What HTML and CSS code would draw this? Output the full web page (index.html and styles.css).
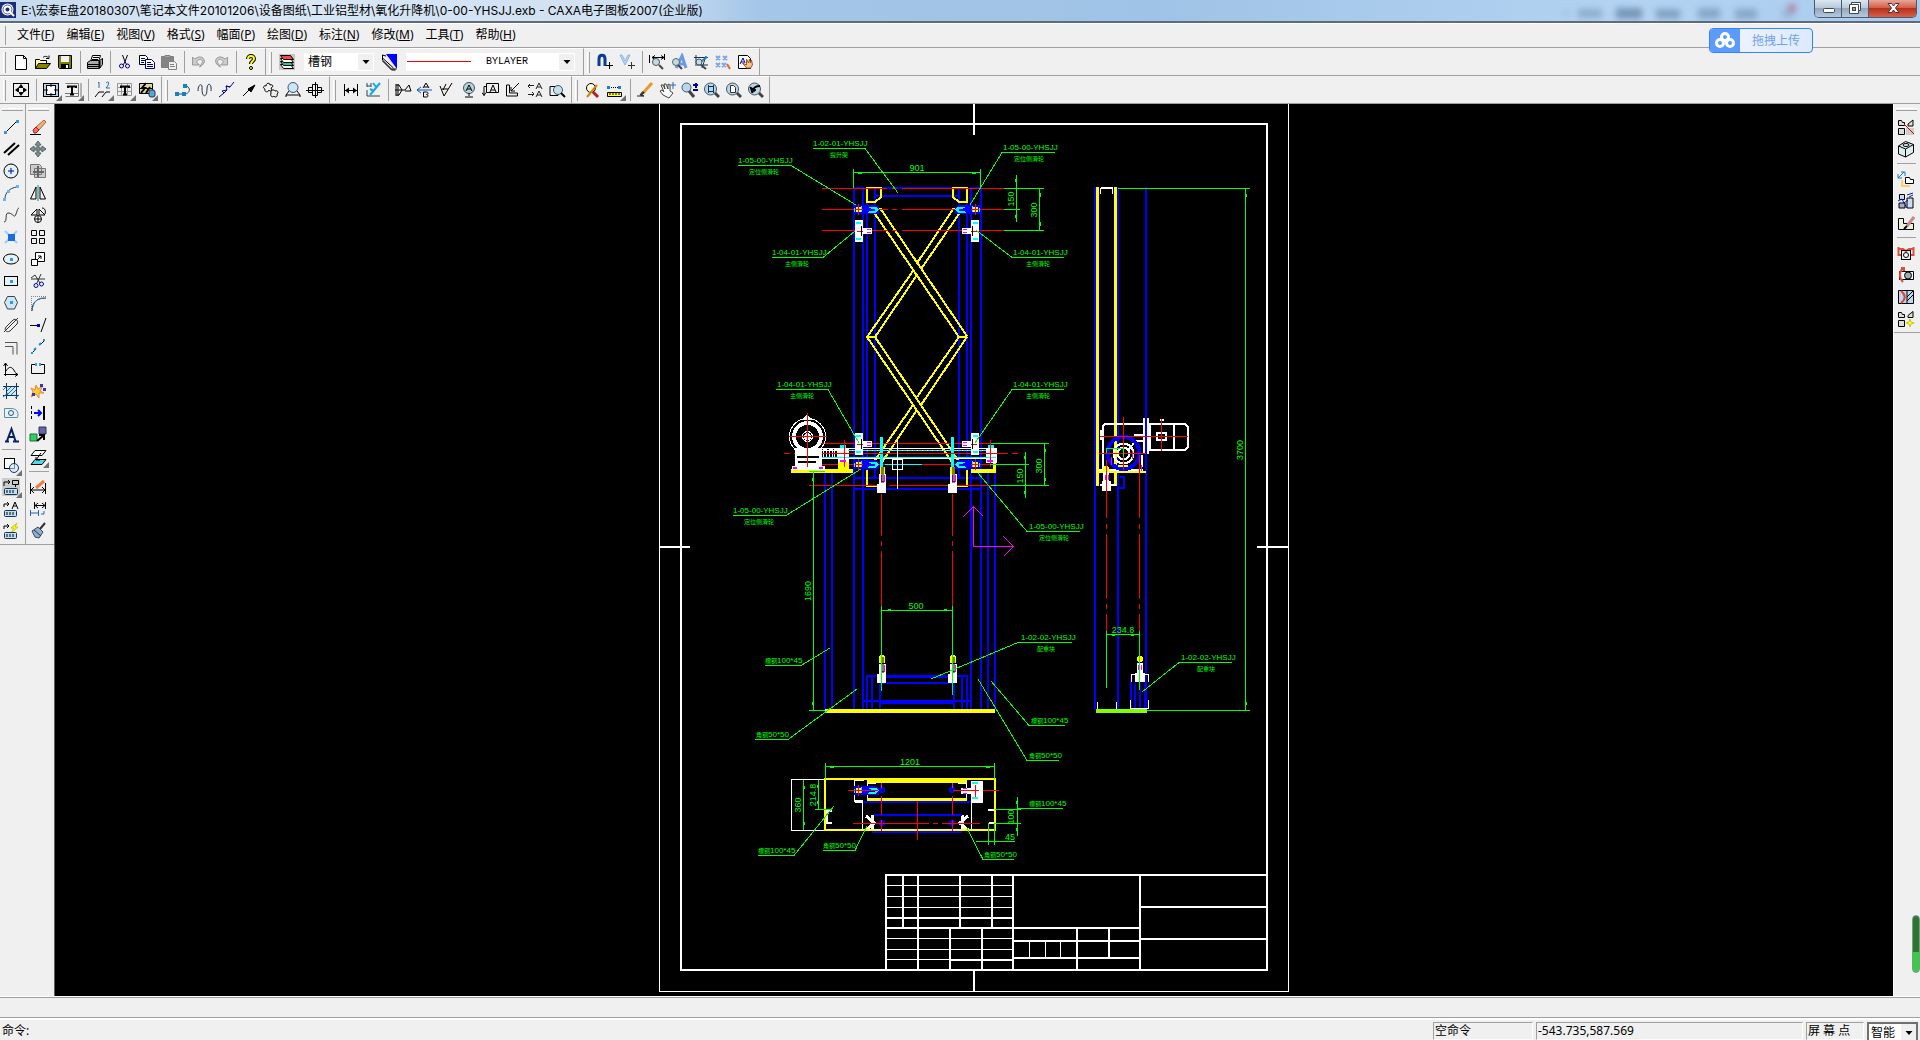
FILE: index.html
```html
<!DOCTYPE html>
<html lang="zh-CN">
<head>
<meta charset="utf-8">
<title>CAXA电子图板2007</title>
<link rel="stylesheet" href="styles.css">
</head>
<body>
<header class="titlebar">
  <svg class="app-icon" viewBox="0 0 16 16"><rect width="16" height="16" fill="#1c2c78"/><circle cx="7.500" cy="7.500" r="6" fill="#fff"/><circle cx="7.500" cy="7.500" r="4.500" fill="none" stroke="#4a5fa8"/><circle cx="7.500" cy="7.500" r="2" fill="#1c2c78"/><path d="M9 9l5 5" stroke="#fff" stroke-width="2"/></svg>
  <h1 class="title">E:\宏泰E盘20180307\笔记本文件20101206\设备图纸\工业铝型材\氧化升降机\0-00-YHSJJ.exb - CAXA电子图板2007(企业版)</h1>
  <svg class="ghost" viewBox="0 0 240 20"><g fill="#4f6f92"><path d="M4 9h4v8h-4z" opacity=".3"/><rect x="18" y="9" width="24" height="9" opacity=".6"/><rect x="56" y="8" width="26" height="11"/><rect x="96" y="9" width="24" height="10" opacity=".8"/><rect x="138" y="8" width="22" height="11" opacity=".7"/><rect x="175" y="9" width="22" height="10" opacity=".7"/><rect x="222" y="9" width="12" height="9" opacity=".4"/></g><circle cx="232" cy="8" r="4" fill="#c0405a"/></svg>
  <div class="winbtns">
    <button class="win" aria-label="最小化"><svg viewBox="0 0 27 17"><rect x="8.500" y="8.500" width="11" height="4" rx="1" fill="#fff" stroke="#3d4656"/></svg></button>
    <button class="win" aria-label="还原"><svg viewBox="0 0 27 17"><path d="M9.500 2.500h9v8h-2v3h-9v-9h2z" fill="#fff" stroke="#3d4656"/><rect x="10.500" y="7.500" width="3" height="3" fill="#8fa5c0" stroke="#3d4656"/><path d="M9.500 4.500h7v6" fill="none" stroke="#3d4656"/></svg></button>
    <button class="win close" aria-label="关闭"><svg viewBox="0 0 47 17"><path d="M19 3.500h3.500l2 2.500 2-2.500h3.500l-3.500 4.500 3.500 4.500h-3.500l-2-2.500-2 2.500h-3.500l3.500-4.500z" fill="#fff" stroke="#4a3038"/></svg></button>
  </div>
</header>
<nav class="menubar">
  <button class="menu">文件(<u>F</u>)</button><button class="menu">编辑(<u>E</u>)</button><button class="menu">视图(<u>V</u>)</button><button class="menu">格式(<u>S</u>)</button><button class="menu">幅面(<u>P</u>)</button><button class="menu">绘图(<u>D</u>)</button><button class="menu">标注(<u>N</u>)</button><button class="menu">修改(<u>M</u>)</button><button class="menu">工具(<u>T</u>)</button><button class="menu">帮助(<u>H</u>)</button>
</nav>
<button class="upload"><svg viewBox="0 0 30 23"><rect width="30" height="23" fill="#5b9bff"/><g fill="none" stroke="#fff" stroke-width="3"><circle cx="15" cy="8" r="3.500"/><circle cx="10" cy="14" r="3.500"/><circle cx="20" cy="14" r="3.500"/></g></svg><span>拖拽上传</span></button>

<div class="toolrow">
  <div class="toolbar">
    <button class="tool" aria-label="新建"><svg viewBox="0 0 18 18"><path d="M3.500 2.500h8l3 3v11h-11z" fill="#fff"/><path d="M11.500 2.500v3h3"/></svg></button>
    <button class="tool" aria-label="打开"><svg viewBox="0 0 18 18"><path d="M1.500 15.500v-9h4l1 1h6v3" fill="#ffffa0"/><path d="M1.500 15.500l3-5h12l-4 5z" fill="#848400"/><path d="M9 4.500c2-2 4-1 5 0m1-2v3h-3"/></svg></button>
    <button class="tool" aria-label="保存"><svg viewBox="0 0 18 18"><path d="M2.500 2.500h13v13h-12l-1-1z" fill="#808000"/><path d="M5 3h8v6h-8z" fill="#f0f0f0" stroke="none"/><path d="M5 11h8v5h-8z" fill="#000" stroke="none"/><path d="M10 12h2v3h-2z" fill="#fff" stroke="none"/></svg></button>
    <span class="sep"></span>
    <button class="tool" aria-label="打印"><svg viewBox="0 0 18 18"><path d="M4.500 8.500l2-6h8l-2 6z" fill="#fff"/><path d="M1.500 9.500l3-2h9l3-2v6l-3 4h-12z" fill="#aaa"/><path d="M7 4.500h6m-7 2h6M2 11.500h11M2 13.500h11"/><path d="M13.500 8v7" stroke-width="2"/></svg></button>
    <span class="sep"></span>
    <button class="tool" aria-label="剪切"><svg viewBox="0 0 18 18"><path d="M6.500 2l3 8M11.500 2l-3 8"/><g stroke="#000080"><circle cx="5.500" cy="13" r="2"/><circle cx="11.500" cy="13" r="2"/><path d="M9 9l-2 3m2-3l2 3"/></g></svg></button>
    <button class="tool" aria-label="复制"><svg viewBox="0 0 18 18"><path d="M1.500 2.500h6l2 2v7h-8z" fill="#fff"/><path d="M7.500 6.500h6l3 3v6h-9z" fill="#fff" stroke="#000080"/><path d="M3 5.500h4m-4 2h4m-4 2h3m3 0h4m-4 2h6m-6 2h6" stroke="#000080"/></svg></button>
    <button class="tool" aria-label="粘贴"><svg viewBox="0 0 18 18"><g stroke="#808080"><path d="M1.500 3.500h12v11h-12z" fill="#848484"/><path d="M5 2.500h5v2h-5z" fill="#aaa"/><path d="M8.500 8.500h6l2 2v6h-8z" fill="#eee"/><path d="M10 11.500h4m-4 2h5"/></g></svg></button>
    <span class="sep"></span>
    <button class="tool" aria-label="撤销"><svg viewBox="0 0 18 18"><path d="M2.500 4v8h7l-3-3c3-5 8-2 5 2l-2 3c8-4 5-11-1-10l-4 2z" stroke="#999" fill="#ccc"/></svg></button>
    <button class="tool" aria-label="重做"><svg viewBox="0 0 18 18"><path d="M15.500 4v8h-7l3-3c-3-5-8-2-5 2l2 3c-8-4-5-11 1-10l4 2z" stroke="#999" fill="#ccc"/></svg></button>
    <span class="sep"></span>
    <button class="tool" aria-label="帮助"><svg viewBox="0 0 18 18"><path d="M6 6c0-4 6-4 6 0 0 2-3 2-3 5" stroke="#000" stroke-width="4"/><path d="M6 6c0-4 6-4 6 0 0 2-3 2-3 5" stroke="#ff0" stroke-width="2"/><circle cx="9" cy="15" r="1.500" fill="#ff0"/></svg></button>
  </div>
  <div class="toolbar">
    <button class="tool" aria-label="图层"><svg viewBox="0 0 18 18"><rect x="1" y="1" width="16" height="16" fill="#c8c4c0" stroke="none"/><path d="M2.500 11.500h10l3 4h-10z" fill="#fff"/><path d="M2.500 8.500h10l3 4h-10z" fill="#2c8"/><path d="M2.500 5.500h10l3 4h-10z" fill="#fff"/><path d="M2.500 2.500h10l3 4h-10z" fill="#f44"/></svg></button>
    <label class="combo layer"><select aria-label="当前图层"><option>槽钢</option></select><svg class="arrow" viewBox="0 0 14 16"><path d="M4 6h7l-3.500 4z" fill="#000"/></svg></label>
    <button class="tool" aria-label="颜色"><svg viewBox="0 0 18 18"><path d="M6 1h11v15z" fill="#00f" stroke="none"/><path d="M2.500 2v5l9 9h5M2.500 5l11 10M2.500 8l9 9h4M2 2l4 1"/></svg></button>
    <label class="combo linetype"><svg class="sample" viewBox="0 0 64 16"><path d="M0 7.500h64" stroke="red"/></svg><select aria-label="线型"><option>BYLAYER</option></select><svg class="arrow" viewBox="0 0 14 16"><path d="M4 6h7l-3.500 4z" fill="#000"/></svg></label>
  </div>
  <div class="toolbar">
    <button class="tool" aria-label="捕捉"><svg viewBox="0 0 18 18"><path d="M3 13v-7c0-5 6-5 6 0v7" stroke="#0a3a9c" stroke-width="3"/><path d="M13.500 9v7m-3.500-3.500h7"/></svg></button>
    <button class="tool" aria-label="过滤"><svg viewBox="0 0 18 18"><path d="M2 2l5 10 5-10-2 0-3 6-3-6z" fill="#bcd8ff" stroke="#8ab4e8"/><path d="M7 4v3" stroke="#cde"/><path d="M13.500 9v7m-3.500-3.500h7" stroke="#333"/></svg></button>
    <span class="sep"></span>
    <button class="tool" aria-label="查询距离"><svg viewBox="0 0 18 18"><path d="M1.500 2v8M16.500 1v6M4 4.500h12M7 2.500l-3 2 3 2M13 2.500l3 2-3 2"/><circle cx="8" cy="9" r="3.500" fill="#c6dcd8" stroke="#456"/><path d="M11 12l4 4" stroke-width="2" stroke="#444"/></svg></button>
    <button class="tool" aria-label="查询文字"><svg viewBox="0 0 18 18"><path d="M6 15l6-12 4 12m-7-4h6" stroke="#6c96e8" stroke-width="3"/><circle cx="6" cy="9" r="3.500" fill="#c6dcd8" stroke="#567"/><path d="M8 12l4 4" stroke-width="2" stroke="#444"/></svg></button>
    <button class="tool" aria-label="查询面积"><svg viewBox="0 0 18 18"><path d="M2 4.500h14M3 12h13M4 2v9M14 3l-4 12" stroke="#135"/><path d="M7 10l8-6" stroke="#28a" stroke-width="2"/><circle cx="7" cy="9" r="3" fill="#c6dcd8" stroke="#456"/><path d="M9 12l5 4" stroke-width="2" stroke="#444"/></svg></button>
    <button class="tool" aria-label="点样式"><svg viewBox="0 0 18 18"><path d="M2 3l4 4m0-4l-4 4M9 3l4 4m0-4l-4 4M2 10l4 4m0-4l-4 4M8 10l4 4m0-4l-4 4" stroke="#7ba4f0" stroke-width="2"/><path d="M13 11l3 5" stroke="#e8622c" stroke-width="2"/></svg></button>
    <button class="tool" aria-label="属性"><svg viewBox="0 0 18 18"><path d="M2.500 2.500h9l3 3v10h-12z" fill="#fff"/><path d="M4 11l3-6 2 5m-4-1h3" stroke="#00a"/><path d="M6.500 10l4 5h4l2-3-1-5-1 3-1-4-1 4-2-4v6z" fill="#f6c48c" stroke="#a05a20"/></svg></button>
  </div>
</div>

<div class="toolrow">
  <div class="toolbar">
    <button class="tool" aria-label="显示全部"><svg viewBox="0 0 18 18"><rect x="1.500" y="2.500" width="15" height="13"/><path d="M9 3l3 4h-6zM9 15l3-4h-6zM3 9l4-3v6zM15 9l-4-3v6z" fill="#000" stroke="none"/></svg></button>
    <span class="sep"></span>
    <button class="tool more" aria-label="图幅"><svg viewBox="0 0 18 18"><rect x="1.500" y="2.500" width="15" height="13" fill="#b8d0e8"/><rect x="4.500" y="4.500" width="9" height="9" fill="#fff"/><path d="M9 2v4m0 6v4M1 9h5m6 0h5" stroke-width="1"/></svg></button>
    <button class="tool more" aria-label="标题栏"><svg viewBox="0 0 18 18"><path d="M1.500 2.500h13M1.500 15.500h13v-13M1 12.500h14M17 2v14" stroke="#777"/><path d="M4 7v-1.500h8v1.500M8 5.500v8m-2 0h4" stroke-width="2"/></svg></button>
    <span class="sep"></span>
    <button class="tool more" aria-label="序号"><svg viewBox="0 0 18 18"><path d="M5 1v6M4 2l1-1M12 2c3-3 4 1 0 5h4" stroke="#246cb0"/><path d="M1 16l4-5h5M8 16l4-5h4"/></svg></button>
    <button class="tool more" aria-label="明细表"><svg viewBox="0 0 18 18"><path d="M1.500 2.500h14v12h-14zM1 6.500h14M1 10.500h14M5.500 2v12M11.500 2v12" stroke="#999"/><path d="M5 7v-1.500h8v1.500M9 5.500v8m-2 0h4" stroke-width="2"/></svg></button>
    <button class="tool more" aria-label="图库"><svg viewBox="0 0 18 18"><path d="M1.500 2.500h13v5h-13zM1.500 7.500h13v5h-13z" fill="#dd8"/><path d="M3 12l4-5-3 0 4-5M8 12l4-6" stroke="#000" stroke-width="2"/><rect x="11" y="9" width="6" height="7" rx="2" fill="#5aa0dc" stroke="#235"/></svg></button>
  </div>
  <div class="toolbar">
    <button class="tool" aria-label="轮廓线"><svg viewBox="0 0 18 18"><path d="M2 13h8c7 0 7-8 1-8" stroke="#345"/><path d="M1 11h4v4h-4zM9 3h4v4h-4zM8 11h4v4h-4z" fill="#1482c8" stroke="none"/></svg></button>
    <button class="tool" aria-label="波浪线"><svg viewBox="0 0 18 18"><path d="M2 10c0-8 5-8 4-2 0 9 5 9 5 0 0-7 5-6 4 2" stroke="#234"/></svg></button>
    <button class="tool" aria-label="双折线"><svg viewBox="0 0 18 18"><path d="M1 16l5-4-2-2 5-1-1-4 4 1 4-5M6 12l3-3m-1-4l4 1" stroke="#00a"/></svg></button>
    <button class="tool" aria-label="箭头"><svg viewBox="0 0 18 18"><path d="M3 15l6-6"/><path d="M15 4l-4 7-3-3z" fill="#000"/></svg></button>
    <button class="tool" aria-label="齿轮"><svg viewBox="0 0 18 18"><path d="M3 8c-3-1-1-4 1-3 0-3 4-4 4-1 3-1 4 2 1 3 2 3-1 4-2 2-1 3-5 2-4-1zM9 12c-1-3 3-4 4-2 3-1 4 2 2 3 1 3-2 4-3 2-2 2-4 0-3-3z"/></svg></button>
    <button class="tool" aria-label="圆孔"><svg viewBox="0 0 18 18"><circle cx="9" cy="6.500" r="5" fill="#cce6f4" stroke="#357"/><path d="M5 10l-3 4v2M13 10l3 4v2M2 14h14"/></svg></button>
    <button class="tool" aria-label="孔轴"><svg viewBox="0 0 18 18"><path d="M6.500 3.500h5v11h-5zM2.500 6.500h4v5h-4zM11.500 6.500h4v5h-4zM0 9.500h18M9.500 1v16"/></svg></button>
  </div>
  <div class="toolbar">
    <button class="tool" aria-label="尺寸标注"><svg viewBox="0 0 18 18"><path d="M2.500 3v12M15.500 3v12M3 9.500h12" /><path d="M3 9.500l4-3v6zM15 9.500l-4-3v6z" fill="#000" stroke="none"/></svg></button>
    <button class="tool" aria-label="坐标标注"><svg viewBox="0 0 18 18"><path d="M3 2v4m0 3v6h13M3 5h4m0-3v4" stroke="#345"/><path d="M6 14l10-12M9 2l4 5M6 8l4 2" stroke="#18a6e8" stroke-width="2"/></svg></button>
    <span class="sep"></span>
    <button class="tool" aria-label="基准代号"><svg viewBox="0 0 18 18"><path d="M2 3v12M4 3v12M2 4h3l3 5-3 5h-3M1 9h10l4-5 2 6h-6"/></svg></button>
    <button class="tool" aria-label="倒角标注"><svg viewBox="0 0 18 18"><path d="M7 7l3-5 3 5m-5-1h4M7.500 11v5h3c2 0 2-2 0-2.500 2 0 2-2.500 0-2.500z"/><path d="M1 9h15M5 6l-4 3 4 3" stroke="#0a50d0"/></svg></button>
    <button class="tool" aria-label="粗糙度"><svg viewBox="0 0 18 18"><path d="M2 5l4 10 8-13M4 8h6M8 3l-3 6"/></svg></button>
    <button class="tool" aria-label="焊接符号"><svg viewBox="0 0 18 18"><circle cx="9" cy="7" r="5.500" fill="#b8d4d8" stroke="#357"/><path d="M6 10l3-6 3 6m-5-2h4M9 12v3m-4 1h8" stroke-width="1"/></svg></button>
    <button class="tool" aria-label="引出说明"><svg viewBox="0 0 18 18"><path d="M4.500 2.500h12v9h-12zM4 5.500h-2v9m-2-3l2 3 2-3M8 11l3-7 3 7m-5-2h4"/></svg></button>
    <button class="tool" aria-label="剖切符号"><svg viewBox="0 0 18 18"><path d="M2.500 4v11h11v-3h-8v-8zM15 2l-8 8m0-4v4h4"/></svg></button>
    <button class="tool" aria-label="形位公差"><svg viewBox="0 0 18 18"><path d="M2 4.500h6M4 3l-2 2 2 2M2 13.500h6M6 11l2 2-2 2M10 8l3-6 3 6m-5-2h4M10 16l3-6 3 6m-5-2h4" stroke="#222"/></svg></button>
    <button class="tool" aria-label="局部放大"><svg viewBox="0 0 18 18"><path d="M2 5.500h8v9h-8z"/><circle cx="10" cy="9" r="4.500" fill="#c6e0e8" stroke="#357"/><path d="M13 12l4 4" stroke-width="2"/></svg></button>
  </div>
  <div class="toolbar">
    <button class="tool" aria-label="重画"><svg viewBox="0 0 18 18"><circle cx="7" cy="7" r="4.500" fill="#fffce0"/><path d="M3 16l10-12" stroke="#c80" stroke-width="2"/><path d="M9 11l5 5" stroke="#b42020" stroke-width="3"/></svg></button>
    <button class="tool more" aria-label="测量"><svg viewBox="0 0 18 18"><path d="M1 5h3v3h-3zM12 5h3v3h-3z" fill="#1482c8" stroke="none"/><path d="M5 6.500h7" stroke-dasharray="1 1"/><path d="M1.500 11.500h14v4h-14z" fill="#ff4"/><path d="M4 12v2m3-2v2m3-2v2m3-2v2"/></svg></button>
    <span class="sep"></span>
    <button class="tool" aria-label="画笔"><svg viewBox="0 0 18 18"><path d="M1 15h7l-4-1 3-4" stroke="#222"/><path d="M7 12l9-10" stroke="#e89830" stroke-width="3"/><path d="M5 14l3-3" stroke="#333" stroke-width="2"/></svg></button>
    <button class="tool" aria-label="平移"><svg viewBox="0 0 18 18"><path d="M5 14l-3-4 2-1 2 2-3-7 2 0 2 4-1-5 2 0 2 5 0-5 2 1v6l3 2-4 5z" fill="#fff" stroke="#444"/><path d="M15 1v7m-3-4h6" stroke="#246cb0"/></svg></button>
    <button class="tool" aria-label="缩放"><svg viewBox="0 0 18 18"><circle cx="6.500" cy="6.500" r="4.500" fill="#b8d8e8" stroke="#456"/><path d="M9 10l5 6" stroke-width="3" stroke="#444"/><path d="M13 4h5m-2-2v5m-3 2h5" stroke="#00a" stroke-width="2"/></svg></button>
    <button class="tool" aria-label="窗口放大"><svg viewBox="0 0 18 18"><circle cx="8.500" cy="8" r="6" fill="#b8d8e8" stroke="#456"/><path d="M13 12l4 4" stroke-width="3" stroke="#444"/><path d="M6.500 5.500h5v5h-5zM6.500 4v8M11.500 4v8" stroke="#135"/></svg></button>
    <button class="tool" aria-label="显示页面"><svg viewBox="0 0 18 18"><circle cx="8.500" cy="8" r="6" fill="#b8d8e8" stroke="#456"/><path d="M13 12l4 4" stroke-width="3" stroke="#444"/><path d="M6.500 4.500h3l2 2v5h-5z" fill="#fff" stroke="#333"/></svg></button>
    <button class="tool" aria-label="显示回溯"><svg viewBox="0 0 18 18"><circle cx="8.500" cy="8" r="6" fill="#b8d8e8" stroke="#456"/><path d="M13 12l4 4" stroke-width="3" stroke="#444"/><path d="M7 9c1-3 3-4 7-4" stroke-width="2"/><path d="M4 6l2 6 4-3z" fill="#000"/></svg></button>
  </div>
</div>

<main class="workspace">
  <div class="vbar">
    <button class="tool" aria-label="直线"><svg viewBox="0 0 18 18"><path d="M4 14L14 4"/><path d="M2 13h3v3h-3zM14 2h3v3h-3z" fill="#3c96dc" stroke="none"/></svg></button>
    <button class="tool" aria-label="平行线"><svg viewBox="0 0 18 18"><path d="M2 13L13 3M6 15L17 5" stroke-width="2"/></svg></button>
    <button class="tool" aria-label="圆"><svg viewBox="0 0 18 18"><circle cx="9" cy="9" r="7" fill="#e4f2fc"/><path d="M9 6v6M6 9h6" stroke="#00a" stroke-width="1"/></svg></button>
    <button class="tool" aria-label="圆弧"><svg viewBox="0 0 18 18"><path d="M3 15C3 9 7 4 15 3" stroke="#246"/><path d="M1 14h3v3h-3zM5 6h3v3h-3zM14 1h3v3h-3z" fill="#6ab4e8" stroke="none"/></svg></button>
    <button class="tool" aria-label="样条"><svg viewBox="0 0 18 18"><path d="M2 16C6 16 2 6 7 7s5 6 7 1 1-5 3-6" stroke="#333"/></svg></button>
    <button class="tool" aria-label="点"><svg viewBox="0 0 18 18"><path d="M3 3l12 12M15 3L3 15" stroke="#9cf" stroke-width="2"/><path d="M6 6h7v7h-7z" fill="#1a6ae0" stroke="none"/></svg></button>
    <button class="tool" aria-label="椭圆"><svg viewBox="0 0 18 18"><ellipse cx="9" cy="9" rx="7.500" ry="5" fill="#e4f2fc"/><path d="M8 8h3v3h-3z" fill="#3c96dc" stroke="none"/></svg></button>
    <button class="tool" aria-label="矩形"><svg viewBox="0 0 18 18"><rect x="2.500" y="4.500" width="13" height="9" fill="#e4f2fc"/><path d="M8 8h3v3h-3z" fill="#3c96dc" stroke="none"/></svg></button>
    <button class="tool" aria-label="正多边形"><svg viewBox="0 0 18 18"><path d="M5.500 2.500h7l3 6-3 6.500h-7l-3-6.500z" fill="#cfe6f4" stroke="#345"/><path d="M8 7h3v3h-3z" fill="#3c96dc" stroke="none"/></svg></button>
    <button class="tool" aria-label="中心线"><svg viewBox="0 0 18 18"><path d="M2 16L16 2M4 11l7-7c3-2 6 1 4 4l-7 7c-4 2-6-1-4-4z" stroke="#333"/></svg></button>
    <button class="tool" aria-label="等距线"><svg viewBox="0 0 18 18"><path d="M3 4.500h12v12M3 8.500h8v8" stroke="#555"/></svg></button>
    <button class="tool" aria-label="公式曲线"><svg viewBox="0 0 18 18"><path d="M3.500 16v-13m-2 3l2-3 2 3M2 14.500h14m-3-2l3 2-3 2M4 11c3-5 6-5 9 1"/></svg></button>
    <button class="tool" aria-label="剖面线"><svg viewBox="0 0 18 18"><path d="M4.500 1v16M14.500 1v16M1 4.500h16M1 13.500h16" stroke="#135"/><path d="M5 5h9v8h-9z" fill="#cfe8f8" stroke="none"/><path d="M5 9l4-4m-4 8l8-8m-4 8l5-5M1 8l4-4M1 15l5-4m7 5l4-3" stroke="#246cb0"/></svg></button>
    <button class="tool" aria-label="填充"><svg viewBox="0 0 18 18"><path d="M2.500 13.500v-9h8c6 1 6 6 5 9z" fill="#e4f2f8" stroke="#5a90a0"/><circle cx="9" cy="9" r="2.500" stroke="#357"/></svg></button>
    <button class="tool" aria-label="文字"><svg viewBox="0 0 18 18"><path d="M3 15.500h4M5 15L9.500 3l4 12M6 11h6M11 15.500h6" stroke="#0a2060" stroke-width="2"/></svg></button>
    <span class="vsep"></span>
    <button class="tool more" aria-label="块"><svg viewBox="0 0 18 18"><rect x="2.500" y="2.500" width="10" height="10" fill="#fff"/><circle cx="12" cy="12" r="4.500" fill="#cfe8f8" fill-opacity=".6" stroke="#0a3a6c"/></svg></button>
    <button class="tool more" aria-label="提取图符"><svg viewBox="0 0 18 18"><path d="M0 0h18v18h-18z" fill="#ccc" stroke="none"/><path d="M2 8v-4h6m-2-2l2 2-2 2M10.500 2.500h6v4h-6zM13.500 6v3"/><rect x="2.500" y="10.500" width="13" height="6" rx="1" fill="#bfe0f4" stroke="#135"/><path d="M5 12v3m3-3v3m3-3v3"/></svg></button>
    <button class="tool" aria-label="文字图符"><svg viewBox="0 0 18 18"><path d="M2 7v-3h5m-2-2l2 2-2 2M10 9l3-7 3 7m-5-3h4"/><rect x="2.500" y="10.500" width="12" height="6" rx="1" fill="#bfe0f4" stroke="#135"/><path d="M5 12v3m3-3v3m3-3v3"/></svg></button>
    <button class="tool" aria-label="驱动图符"><svg viewBox="0 0 18 18"><path d="M2 7v-3h5m-2-2l2 2-2 2"/><path d="M15 1l-6 5h3l-3 5 7-6h-3z" fill="#ff3" stroke="#cc0"/><rect x="2.500" y="10.500" width="12" height="6" rx="1" fill="#bfe0f4" stroke="#135"/><path d="M5 12v3m3-3v3m3-3v3"/></svg></button>
  </div>
  <div class="vbar second">
    <button class="tool" aria-label="删除"><svg viewBox="0 0 18 18"><path d="M7 9l8-7 2 2-7 8z" fill="#f0b070" stroke="#a64"/><path d="M4 12l3-3 3 3-3 3h-2z" fill="#f66" stroke="#a22"/><path d="M1 16.500h11"/></svg></button>
    <button class="tool" aria-label="平移"><svg viewBox="0 0 18 18"><path d="M9 1l3 4h-2v3h3v-2l4 3-4 3v-2h-3v3h2l-3 4-3-4h2v-3h-3v2l-4-3 4-3v2h3v-3h-2z" fill="#7c9090" stroke="#566"/></svg></button>
    <button class="tool" aria-label="复制选择"><svg viewBox="0 0 18 18"><path d="M1.500 2.500h9l2 2v8h-11zM5.500 6.500h11v9h-11z" fill="#ccc" stroke="#777"/><path d="M9 4v11M4 10h11" stroke="#666" stroke-width="2"/></svg></button>
    <button class="tool" aria-label="镜像"><svg viewBox="0 0 18 18"><path d="M7 3v12h-5.500zM11 3v12h5.500z"/><path d="M9 1v16" stroke="#088"/></svg></button>
    <button class="tool" aria-label="旋转"><svg viewBox="0 0 18 18"><path d="M2 9l6-6v6zM10 3l6 6h-6zM13 2c3 0 4 3 3 6"/><circle cx="9" cy="13" r="3.500" fill="#fff"/><path d="M9 10v6m-3-3h6"/></svg></button>
    <button class="tool" aria-label="阵列"><svg viewBox="0 0 18 18"><path d="M2.500 2.500h5v5h-5zM10.500 2.500h5v5h-5zM2.500 10.500h5v5h-5zM10.500 10.500h5v5h-5z" fill="#eee"/></svg></button>
    <button class="tool" aria-label="比例缩放"><svg viewBox="0 0 18 18"><path d="M6.500 2.500h9v9h-9z" fill="#fff"/><path d="M2.500 9.500h6v6h-6z" fill="#fff"/><path d="M8 10l4-4m-3 0h3v3"/></svg></button>
    <button class="tool" aria-label="裁剪"><svg viewBox="0 0 18 18"><path d="M2 6l4-3 5 8M12 2l-4 9M2 7h14" stroke="#333"/><circle cx="7" cy="13.500" r="2" stroke="#00a"/><circle cx="12.500" cy="12" r="2" stroke="#00a"/></svg></button>
    <button class="tool" aria-label="过渡"><svg viewBox="0 0 18 18"><path d="M2 2.500h15M2.500 2v15" stroke="#888" stroke-dasharray="1 1"/><path d="M3 17c0-9 5-13 14-13" stroke="#124" stroke-width="1"/><path d="M4 13c1-5 4-8 9-9" stroke="#39c"/></svg></button>
    <button class="tool" aria-label="延伸"><svg viewBox="0 0 18 18"><path d="M1 9.500h9M17 2l-5 14"/><path d="M8 8h3v3h-3z" fill="#00c" stroke="none"/></svg></button>
    <button class="tool" aria-label="打断"><svg viewBox="0 0 18 18"><path d="M3 15l4-4M11 7l4-4"/><path d="M5 12l2-2M10 7l2-2M2 15h2M14 2h2" stroke="#29c" stroke-width="2"/></svg></button>
    <button class="tool" aria-label="拉伸"><svg viewBox="0 0 18 18"><path d="M6 4.500h-3.500v9h13v-9h-3.500"/><path d="M6 3h2v3h-2zM10 3h2v3h-2z" fill="#3c96dc" stroke="none"/></svg></button>
    <button class="tool" aria-label="打散"><svg viewBox="0 0 18 18"><path d="M2 6l4 2 1-5 2 4 5-3-3 5 4 2-5 0 0 5-3-4-5 3 2-5z" fill="#fc3" stroke="#e83"/><path d="M11 2h3v3h-3zM14 6h3v3h-3zM3 11h3v3h-3z" fill="#33c" stroke="none"/></svg></button>
    <button class="tool" aria-label="改变层"><svg viewBox="0 0 18 18"><path d="M2.500 2v14" stroke-dasharray="3 2"/><path d="M15 2v14" stroke-width="2"/><path d="M5 9h7M9 6l3 3-3 3" stroke="#00f" stroke-width="2"/></svg></button>
    <button class="tool" aria-label="格式刷"><svg viewBox="0 0 18 18"><path d="M10 1h7v7h-7z" fill="#66a" stroke="#335"/><path d="M1 8h7v7h-7z" fill="#3c6" stroke="#173"/><path d="M8 15l6-5M10 9h5v5" stroke-width="2"/></svg></button>
    <button class="tool more" aria-label="层控制"><svg viewBox="0 0 18 18"><path d="M6 2.500h11l-4 5h-11z" fill="#fff"/><path d="M6 11.500h11l-4 5h-11z" fill="#4fd8e8"/><path d="M12 5l-5 7m0-3v3h4"/></svg></button>
    <span class="vsep"></span>
    <button class="tool" aria-label="标注编辑"><svg viewBox="0 0 18 18"><path d="M1.500 5v11M16.500 5v11M2 12h14M5 9l-3 3 3 3M13 9l3 3-3 3"/><path d="M7 10l8-7" stroke="#f08040" stroke-width="3"/></svg></button>
    <button class="tool" aria-label="尺寸驱动"><svg viewBox="0 0 18 18"><path d="M5.500 2v7M16.500 2v7M6 5.500h10M9 3l-3 2.500 3 2.500M13 3l3 2.500-3 2.500"/><path d="M1.500 10v6M9.500 10v6M2 13h7M15 11v3h-3" stroke="#26a"/></svg></button>
    <button class="tool" aria-label="特性匹配"><svg viewBox="0 0 18 18"><path d="M16 1l-5 6" stroke="#333" stroke-width="2"/><path d="M3 9l6-4 5 5-4 6-4-1z" fill="#8fb0cc" stroke="#346"/><path d="M5 8l7 6" stroke="#234"/></svg></button>
  </div>

  <section class="canvas" aria-label="绘图区">
  <svg class="drawing" viewBox="55 104 1838 892">
    <!-- sheet border -->
    <g class="white"><path d="M659.500 104v887.500h629V104"/></g>
    <g class="white w2"><path d="M681 124h586v846H681zM974 104v31M974 970v21M659 547h31M1257 547h31"/></g>
    <!-- title block -->
    <g class="white w2"><path d="M886 970v-95h381M903 875v53M918 875v95M960 875v53M992 875v53M1013 875v95M1140 875v95M950 928v42M982 928v42M1077 928v42M1109 928v30M886 918h127M886 928h254M950 960h63M1013 941h127M1013 958h127M1140 907h127M1140 939h127"/></g>
    <g class="white"><path d="M886 885.500h127M886 896.500h127M886 907.500h127M886 938.500h127M886 949.500h127M886 959.500h64M1029.500 941v17M1045.500 941v17M1060.500 941v17"/></g>

    <!-- front view: rails -->
    <g class="blue w2"><path d="M854 187v523M863 187v523M971 187v523M981 187v523M867 187v291M875 187v291M959 187v291M967 187v291M825 473v237M832 473v237M988 473v237M995 473v237M854 188h9M971 188h10M875 188h84M875 196h84M854 478h127M854 489h127M867 709v-33h100v33M872 676v33M880 683v26M954 683v26M962 676v33M880 683h74M863 701h108M880 703h74M880 677h74"/></g>
    <!-- scissor braces -->
    <g class="yellow w2"><path d="M867 202v-14h14v9l-6 5zM967 202v-14h-14v9l6 5z"/><path d="M880 208L967 336M875 214L959 337M954 208L917 263M959 214L921 269M913 271L867 337M917 275L875 337M867 337h8M959 337h8"/><path d="M867 337L954 465M875 337L958 460M959 337L917 397M967 337L921 405M913 405L875 460M917 410L880 465M867 470v16h11M967 470v16h-11"/></g>
    <!-- centre lines -->
    <g class="red"><path d="M822 188.500h65M892 188.500h5M902 188.500h102M822 209.500h66M892 209.500h5M902 209.500h102M822 230.500h66M892 230.500h5M902 230.500h102M819 443.500h172M819 464.500h172M809 485.500h75M889 485.500h102M881.500 494v42M881.500 541v5M881.500 551v55M952.500 494v42M952.500 541v5M952.500 551v55"/></g>
    <!-- drive shaft -->
    <g class="white"><path d="M820 448.500h176M820 458.500h176M820 450.500h176" stroke-width="1"/><path d="M838 448h10v14h-10zM986 448h10v14h-10z" fill="#fff"/><path d="M823 449h3v9h-3zM829 449h3v9h-3zM834 449h3v9h-3z"/></g>
    <g class="cyan"><path d="M848 450.500h138" stroke-dasharray="4 1"/><path d="M820 457.500h176"/><path d="M881 437v30M952 437v30" stroke-width="3"/><path d="M840 446h6M988 446h6" stroke-width="3"/></g>
    <g fill="#ff0"><path d="M791 469h62v4h-62zM971 469h25v4h-25zM993 463h3v8h-3zM838 462h11v7h-11zM880 467h5v7h-5zM950 467h5v7h-5z"/></g>
    <g class="red"><path d="M784 453.500h6M794 453.500h214M1012 453.500h6"/></g>
    <!-- motor, end view -->
    <g class="white"><path d="M795 448h26v20h-26z" fill="#fff"/><path d="M792 466h32v3h-32z" fill="#fff"/><circle cx="807.500" cy="436.500" r="18"/><circle cx="807.500" cy="436.500" r="15"/><circle cx="807.500" cy="436.500" r="13" stroke-width="3"/><circle cx="807.500" cy="436.500" r="5"/><circle cx="807.500" cy="436.500" r="3" fill="#fff"/><path d="M804 419l3-4 4 4z" fill="#fff"/></g>
    <path d="M797 457h22M798 462h18" stroke="#000" stroke-width="2"/>
    <g class="red"><path d="M789 436.500h38M807.500 413v54M844.500 440v27M990.500 440v27"/></g>
    <g class="magenta"><path d="M793 467.500h4M819 467.500h4M840 460.500h6M987 460.500h6" stroke-width="2"/></g>

    <defs>
      <g id="clamp"><path d="M854 205h19l6 2v7h-25z" fill="#00f"/><path d="M868 206.500h8l3 3-3 3h-8l4-3z" fill="#0ff"/><path d="M870 209.500h5" stroke="#00f" stroke-width="2"/><path d="M856 207h5v5h-5z" fill="#ff0"/><path d="M854.500 208v4M861.500 206v6" stroke="#0ff"/><path d="M858.500 204v11M855 209.500h8" stroke="red"/></g>
      <g id="roller"><path d="M855 220h8v8h9v6h-9v8h-8z" fill="#fff"/><path d="M856 222h5v2h-5zM856 238h5v2h-5z" fill="#0ff"/><path d="M857 231h6" stroke="red"/><path d="M861.500 226v10" stroke="#000"/><path d="M867 229.500h4M867 232.500h4" stroke="#f0f"/></g>
      <g id="hanger"><path d="M-3 17h7v-10h-7zM-5 17h9v9h-9z" fill="#fff"/><path d="M-1 8v6h3v-6" fill="none" stroke="#f0f"/><path d="M-1 0h3v16h-3z" fill="#000" opacity=".5"/></g>
    </defs>
    <use href="#clamp"/><use href="#clamp" transform="matrix(-1 0 0 1 1834 0)"/>
    <use href="#clamp" transform="translate(0 255)"/><use href="#clamp" transform="matrix(-1 0 0 1 1834 255)"/>
    <use href="#roller"/><use href="#roller" transform="matrix(-1 0 0 1 1834 0)"/>
    <use href="#roller" transform="translate(0 213)"/><use href="#roller" transform="matrix(-1 0 0 1 1834 213)"/>
    <use href="#hanger" transform="translate(882 467)"/><use href="#hanger" transform="translate(953 467)"/>
    <g fill="#ff0"><path d="M880 655h4l1 2v6h-6v-6zM951 655h4l1 2v6h-6v-6z"/></g>
    <use href="#hanger" transform="translate(882 657)"/><use href="#hanger" transform="translate(953 657)"/>
    <path d="M825 709h170v4h-170z" fill="#ff0"/>

    <!-- front view dimensions -->
    <g class="green">
      <path d="M853.500 169v19M980.500 169v19M853 172.500h128M858 173.500h4M972 173.500h4"/>
      <path d="M1004 188.500h40M1004 209.500h16M1004 230.500h40M1016.500 175v47M1039.500 188v42M1015.500 179v3M1015.500 215v3M1040.500 193v4M1040.500 222v4"/>
      <path d="M991 443.500h58M990 464.500h39M991 485.500h58M1044.500 443v42M1025.500 452v46M1045.500 449v3M1045.500 478v3M1024.500 456v3M1024.500 491v3"/>
      <path d="M809 471.500h16M809 710.500h16M813.500 472v238M812.500 478v3M812.500 702v3M881.500 606v85M952.500 606v89M881 610.500h72M888 609.500h3M944 609.500h3"/>
      <path d="M813 148.500h52L898 193M738 165.500h53L856 205M1055 152.500h-53L970 205M772 257.500h51L855 231M1064 257.500h-52L976 230M776 389.500h52L859 443M1064 389.500h-52L975 443M733 515.500h53L861 469M1080 531.500h-53L978 473"/>
      <path d="M765 665.500h36L830 648M755 739.500h33L857 689M1072 642.500h-54L931 679M1065 725.500h-36L991 681M1059 760.500h-32L978 679"/>
    </g>
    <!-- cursor and origin -->
    <g class="cyan"><path d="M885 464.500h37"/></g>
    <g class="white"><path d="M892.500 459.500h10v10h-10zM897.500 440v49"/></g>
    <g class="magenta"><path d="M973.500 507v39.500h40M963 517l10.500-10.500L983 516M1003 536l10.500 10.500L1004 556"/></g>

    <!-- side view -->
    <g class="blue w2"><path d="M1095 187v523M1118 187v523M1146 187v523M1120 477h4v11h-5M1131 676v32M1135 683v26M1140 683v26M1145 676v33"/></g>
    <g class="white"><path d="M1101 188h12" stroke-width="2"/><path d="M1100.500 188v6M1112.500 188v6M1097.500 702v8M1116.500 702v8M1131 682v-8h4M1148 682v-8h-4M1130.500 700v9M1148.500 700v9M1131 708.500h17"/></g>
    <g fill="#ff0"><path d="M1096 187h3v299h-3zM1114 187h3v299h-3z"/></g>
    <g class="white w2"><path d="M1103 472v-46l2-2h38M1150 424h35l3 3v20l-3 3h-35zM1144 418v36M1148 418v36M1174 424v26M1157 433h9v7h-9zM1160 420h4M1134 435h10M1128 450l8-9h8M1101 430v10M1142 455v12"/><circle cx="1123.500" cy="453.500" r="10"/><circle cx="1123.500" cy="453.500" r="6"/><path d="M1099 470h44M1100 485h16" stroke-width="2"/></g>
    <path d="M1146 415v42" class="blue w2"/>
    <circle cx="1123.500" cy="453" r="16" class="blue" stroke-width="4"/>
    <g class="yellow w2"><path d="M1099 472h47M1118 466h10"/></g>
    <g class="magenta"><path d="M1111.500 457v8M1132.500 451v8M1141.500 465v6"/></g>
    <circle cx="1106" cy="469" r="3" fill="#ff0"/><circle cx="1140" cy="659" r="3" fill="#ff0"/>
    <path d="M1103 472h6v9h2v10h-9v-10h1zM1137 663h6v10h2v9h-10v-9h2z" fill="#fff"/>
    <path d="M1105 475v5M1108 475v5M1138.500 665v5M1141.500 665v5" stroke="#f0f"/>
    <g class="red"><path d="M1100 436.500h88M1161.500 419v32M1123.500 417v53M1099 453.500h47M1106.500 460v58M1106.500 524v5M1106.500 534v65M1106.500 604v5M1106.500 614v18M1139.500 455v63M1139.500 524v5M1139.500 534v65M1139.500 604v5M1139.500 614v18"/></g>
    <path d="M1096 709h51v4h-51z" fill="#80ff00"/>
    <g class="green"><path d="M1118 188.500h132M1147 710.500h103M1245.500 188v522M1246.500 194v3M1246.500 702v3M1106.500 631v57M1139.500 631v59M1106 634.500h33M1112 635.500h3M1131 635.500h3M1106.500 453v-5h17v9M1232 662.500h-53L1142 692"/></g>

    <!-- plan view -->
    <g class="white"><path d="M825 779.500h-33.500v51h33.500M854.500 802v-22h9M854.500 802h9M862.500 802v27M971.500 802v27M867.500 781v20M966.500 781v20"/><path d="M855 801h8M868 783h8M958 783h8M826 811h6M826 823h6M826.500 810v14M988 810h6M994.500 810v13M989 823h5" stroke-width="2"/><path d="M971 781h11v21h-11zM961 788h10v5h-10z" fill="#fff"/><path d="M866 816l8 7-8 7M872 815v16M968 816l-8 7 8 7M962 815v16" stroke-width="3"/></g>
    <g class="yellow w2"><path d="M825 779h170v51h-170z"/></g>
    <g fill="#ff0"><path d="M867 779h100v4h-100zM867 798h100v3h-100z"/></g>
    <g class="blue w2"><path d="M863 802h108M874 815h88M872 832h90"/><circle cx="882" cy="790" r="2"/><circle cx="952" cy="790" r="2"/><circle cx="882" cy="823" r="2"/><circle cx="952" cy="823" r="2"/></g>
    <g fill="#0ff"><path d="M972 782h6v2h-6zM972 797h6v2h-6z"/></g>
    <use href="#clamp" transform="translate(0 581)"/>
    <g class="red"><path d="M848 790.500h30M953 790.500h26M983 790.500h16M853 823.500h76M933 823.500h5M942 823.500h38M917.500 801v39M881.500 796v19M881.500 820v11M952.500 796v19M952.500 820v11M975.500 785v12"/></g>
    <g class="magenta"><path d="M881.500 783v5M952.500 783v5M963 788.500h4M963 793.500h4"/></g>
    <g class="green">
      <path d="M825.500 763v16M994.500 763v16M825 766.500h170M830 767.500h4M986 767.500h4M803.500 780v50M818.500 780v29M815 809.500h17M804.500 786v3M804.500 822v3M817.500 785v3M817.500 801v3"/>
      <path d="M995 809.500h26M995 823.500h26M1017.500 797v39M1018 808.500h45M976 841.500h39M988.500 823v22M994.500 823v22M1016.500 801v3M1016.500 828v3"/>
      <path d="M758 855.500h36L834 806M823 850.500h32L867 826M1014 859.500h-31L967 828"/>
    </g>

    <!-- part labels -->
    <g class="code">
      <text x="813" y="146">1-02-01-YHSJJ</text><text x="738" y="163">1-05-00-YHSJJ</text><text x="1003" y="150">1-05-00-YHSJJ</text><text x="772" y="255">1-04-01-YHSJJ</text><text x="1013" y="255">1-04-01-YHSJJ</text><text x="777" y="387">1-04-01-YHSJJ</text><text x="1013" y="387">1-04-01-YHSJJ</text><text x="733" y="513">1-05-00-YHSJJ</text><text x="1029" y="529">1-05-00-YHSJJ</text><text x="1021" y="640">1-02-02-YHSJJ</text><text x="1181" y="660">1-02-02-YHSJJ</text>
    </g>
    <g class="part">
      <text x="839" y="157">提升架</text><text x="764" y="174">定位侧滑轮</text><text x="1029" y="161">定位侧滑轮</text><text x="797" y="266">主侧滑轮</text><text x="1038" y="266">主侧滑轮</text><text x="802" y="398">主侧滑轮</text><text x="1038" y="398">主侧滑轮</text><text x="759" y="524">定位侧滑轮</text><text x="1054" y="540">定位侧滑轮</text><text x="1046" y="651">配重块</text><text x="1206" y="671">配重块</text>
    </g>
    <g class="code">
      <text x="765" y="663"><tspan class="cn">槽钢</tspan>100*45</text><text x="756" y="737"><tspan class="cn">角钢</tspan>50*50</text><text x="1031" y="723"><tspan class="cn">槽钢</tspan>100*45</text><text x="1029" y="758"><tspan class="cn">角钢</tspan>50*50</text><text x="758" y="853"><tspan class="cn">槽钢</tspan>100*45</text><text x="823" y="848"><tspan class="cn">角钢</tspan>50*50</text><text x="984" y="857"><tspan class="cn">角钢</tspan>50*50</text><text x="1029" y="806"><tspan class="cn">槽钢</tspan>100*45</text>
    </g>
    <g class="dim">
      <text x="917" y="171">901</text><text x="916" y="609">500</text><text x="910" y="765">1201</text><text x="1123" y="633">234.8</text><text x="1010" y="840">45</text>
      <text transform="translate(1014 199) rotate(-90)">150</text><text transform="translate(1037 210) rotate(-90)">300</text><text transform="translate(1042 466) rotate(-90)">300</text><text transform="translate(1023 476) rotate(-90)">150</text><text transform="translate(811 591) rotate(-90)">1690</text><text transform="translate(1243 450) rotate(-90)">3700</text><text transform="translate(801 805) rotate(-90)">360</text><text transform="translate(816 795) rotate(-90)">214.8</text><text transform="translate(1014 817) rotate(-90)">100</text>
    </g>
  </svg>
  </section>

  <aside class="vbar right">
    <button class="tool" aria-label="隐藏块"><svg viewBox="0 0 18 18"><path d="M1.500 2.500h3l1 2h2v3h-6zM11 8h5v-6l-5 4zM1.500 10.500h6v6h-6z" fill="#ddd"/><path d="M9 10h8v7h-8z" fill="#ccc" stroke="none"/><path d="M7 6l10 10" stroke="#c00" stroke-width="1"/></svg></button>
    <button class="tool" aria-label="三维块"><svg viewBox="0 0 18 18"><path d="M1.500 6l7-4.500 8 3v8l-8 4.500-7-3z" fill="#dceef0"/><path d="M1.500 6l7 3v8M8.500 9l8-4.500"/><ellipse cx="9" cy="5" rx="3" ry="1.500"/></svg></button>
    <span class="vsep"></span>
    <button class="tool" aria-label="块移动"><svg viewBox="0 0 18 18"><path d="M1 8l6-6M1 4v4h4M4 2h4v4" stroke="#147cc8" stroke-width="1"/><path d="M8.500 7.500h4l1 2h3v4h-8z" fill="#fff"/><path d="M5 10v6h8" stroke="#fc6" stroke-width="2"/></svg></button>
    <button class="tool" aria-label="块编辑"><svg viewBox="0 0 18 18"><path d="M2.500 2.500h5v5h-5zM10 6h6v10h-6z" fill="#cde"/><path d="M1 9l4-2 2 4 4-3M3 15l4-4 3 5M10 3l6-2M12 5l4-2" stroke="#11c" stroke-width="1"/><path d="M2 11h6v5h-6z" fill="#aac"/></svg></button>
    <button class="tool" aria-label="块修改"><svg viewBox="0 0 18 18"><path d="M1.500 15.500v-11h5v5h10v6z" fill="#eef4dc"/><path d="M10 12l7-9" stroke="#c88" stroke-width="3"/><path d="M7 15l3-3" stroke-width="2"/></svg></button>
    <span class="vsep"></span>
    <button class="tool" aria-label="关联"><svg viewBox="0 0 18 18"><path d="M1.500 3v8h3M16.500 3v8h-3M1 5h5l3 2 3-2h5" stroke="#e05038" stroke-width="2"/><rect x="4.500" y="6.500" width="9" height="9"/><circle cx="9" cy="11" r="2.500" fill="#fff"/></svg></button>
    <button class="tool" aria-label="旋转块"><svg viewBox="0 0 18 18"><path d="M2.500 5.500h14v8h-14z" fill="#fff"/><circle cx="11" cy="9.500" r="3.500" fill="#9ab"/><path d="M6 2c-4 4-4 10 0 14M4 2h3v3" stroke="#e05038" stroke-width="2"/></svg></button>
    <button class="tool" aria-label="剖面块"><svg viewBox="0 0 18 18"><path d="M1.500 2.500h15v13h-15z" fill="#bcd8f0"/><path d="M4 3c5 4 5 8 0 12" stroke="#d43" stroke-width="2"/><path d="M10 3v12M10 9l6-6m-6 10l6-6"/></svg></button>
    <button class="tool" aria-label="块驱动"><svg viewBox="0 0 18 18"><path d="M1.500 2.500h3l1 2h2v3h-6zM11 7.500h5v-6l-5 4zM1.500 10.500h6v6h-6z" fill="#ddd"/><path d="M13 9l1 3 3 1-3 1-1 3-1-3-3-1 3-1z" fill="#ff3" stroke="#cc0"/></svg></button>
  </aside>
  <div class="meter" aria-hidden="true"></div>
</main>

<div class="command"></div>
<footer class="status">
  <span class="prompt">命令:</span>
  <span class="cell mode">空命令</span>
  <span class="cell coords">-543.735,587.569</span>
  <span class="cell point">屏 幕 点</span>
  <label class="snap"><select aria-label="捕捉方式"><option>智能</option></select><svg class="arrow" viewBox="0 0 14 16"><path d="M4 7h7l-3.500 4z" fill="#000"/></svg></label>
</footer>
</body>
</html>
```
FILE: styles.css
```css
* { box-sizing: border-box; }
body {
  margin: 0;
  height: 100vh;
  display: flex;
  flex-direction: column;
  position: relative;
  overflow: hidden;
  background: #f0f0f0;
  color: #000;
  font: 12px/16px "Noto Sans", "Noto Sans CJK SC", sans-serif;
}
button, select { font: inherit; color: inherit; border: 0; padding: 0; background: none; appearance: none; border-radius: 0; }
svg { display: block; flex: none; }

.titlebar {
  display: flex;
  flex: none;
  height: 23px;
  background: linear-gradient(90deg, #c3d9ee 0, #dbe8f5 200px, #cfe0f2 640px, #a4c6e8 760px, #9fc3e6 60%, #b4d3f2 85%, #a8cbee 100%);
  border-bottom: 2px solid #5f6b7b;
}
.app-icon { width: 16px; height: 16px; margin-top: 2px; }
.title { margin: 2px 0 0 5px; font: 400 12px/17px Inter, "Noto Sans CJK SC", sans-serif; white-space: nowrap; flex: 1; }
.ghost { width: 240px; height: 20px; margin-right: 14px; filter: blur(3px); opacity: .6; }
.winbtns { display: flex; height: 18px; margin-right: 3px; border: 1px solid #4c5a6e; border-top: 0; border-radius: 0 0 5px 5px; overflow: hidden; }
.win { width: 27px; border-right: 1px solid #4c5a6e; background: linear-gradient(#dbe7f3, #b9c9da 45%, #93a7bf 50%, #b5c9df); }
.win svg { width: 27px; height: 17px; }
.win.close { width: 47px; border-right: 0; background: linear-gradient(#e8a798, #d2604a 45%, #b8301a 50%, #d8604a); }
.win.close svg { width: 47px; }

.menubar {
  display: flex;
  flex: none;
  height: 25px;
  padding: 2px 0 3px 11px;
  border-top: 1px solid #fff;
  border-bottom: 1px solid #a0a0a0;
  background: linear-gradient(#a0a0a0, #a0a0a0) 5px 2px / 1px 19px no-repeat;
}
.menu { padding: 0 6px; white-space: nowrap; }
.upload {
  position: absolute;
  right: 107px;
  top: 28px;
  display: flex;
  width: 104px;
  height: 25px;
  border: 1px solid #3385ff;
  border-radius: 4px;
  overflow: hidden;
  background: linear-gradient(90deg, #f2f7ff, #dce9ff);
  color: #6ea1f5;
}
.upload svg { width: 30px; height: 23px; }
.upload span { flex: 1; line-height: 23px; text-align: center; }

.toolrow { display: flex; flex: none; height: 28px; border-bottom: 1px solid #a0a0a0; }
.toolbar {
  display: flex;
  align-items: center;
  padding: 0 3px 0 10px;
  border-right: 1px solid #a0a0a0;
  border-top: 1px solid #fff;
  background: linear-gradient(#a0a0a0, #a0a0a0) 5px 3px / 1px 21px no-repeat, linear-gradient(#fff, #fff) 3px 3px / 1px 21px no-repeat;
}
.tool { position: relative; width: 22px; height: 22px; flex: none; }
.tool svg { width: 18px; height: 18px; margin: 2px; fill: none; stroke: #000; }
.more::after { content: ""; position: absolute; right: 0; bottom: 0; border: 3px solid; border-color: transparent #707070 #707070 transparent; }
.sep { width: 8px; height: 22px; background: linear-gradient(#a0a0a0, #a0a0a0) 4px 0 / 1px 22px no-repeat; }

.combo { display: flex; height: 18px; margin: 0 4px 0 6px; background: #fff; }
.combo select { flex: 1; width: 10px; padding-left: 4px; line-height: 18px; }
.combo .arrow { width: 15px; height: 16px; margin: 1px; background: #f0f0f0; }
.layer { width: 70px; }
.linetype { width: 169px; margin-right: 5px; font-family: "Liberation Mono", monospace; font-size: 10px; }
.linetype .sample { width: 64px; height: 16px; margin: 1px; }
.linetype select { padding-left: 14px; }

.workspace { flex: 1; display: flex; position: relative; min-height: 0; }
.vbar {
  align-self: flex-start;
  flex: none;
  display: flex;
  flex-direction: column;
  width: 26px;
  padding: 12px 4px 2px 0;
  border-right: 1px solid #a0a0a0;
  border-bottom: 1px solid #a0a0a0;
  background: linear-gradient(#a0a0a0, #a0a0a0) 2px 6px / 21px 1px no-repeat, linear-gradient(#fff, #fff) 2px 4px / 21px 1px no-repeat;
}
.vbar.second { width: 28px; padding-left: 1px; border-right: 0; }
.vbar.right { padding-left: 1px; border-right: 0; }
.vsep { height: 8px; background: linear-gradient(#a0a0a0, #a0a0a0) 2px 3px / 20px 1px no-repeat; }
.canvas { flex: 1; min-width: 0; min-height: 0; background: #000; border-left: 1px solid #606060; box-shadow: 1px 0 0 #fff; margin-right: 1px; }
.drawing { width: 100%; height: 100%; shape-rendering: crispEdges; }
.drawing .white, .drawing .blue, .drawing .green, .drawing .red, .drawing .yellow, .drawing .cyan, .drawing .magenta { fill: none; }
.white { stroke: #fff; }
.blue { stroke: #00f; }
.green { stroke: #0f0; }
.red { stroke: #f00; }
.yellow { stroke: #ff0; }
.cyan { stroke: #0ff; }
.magenta { stroke: #f0f; }
.w2 { stroke-width: 2; }
.code, .part, .dim { fill: #0f0; font-family: "Liberation Sans Narrow", "Liberation Sans", sans-serif; font-size: 8px; }
.part, .cn { font-family: "Noto Sans CJK SC", sans-serif; font-size: 6px; }
.part, .dim { text-anchor: middle; }
.dim { font-size: 9px; }

.meter {
  position: absolute;
  right: 0;
  bottom: 23px;
  width: 8px;
  height: 58px;
  border: 1px solid #909090;
  border-radius: 4px;
  background: linear-gradient(#267a30 65%, #35cf45 65%);
}

.command { flex: none; height: 24px; border-top: 1px solid #fff; border-bottom: 2px solid #fff; box-shadow: inset 0 1px 0 #a0a0a0, inset 0 -1px 0 #a0a0a0; }
.status { display: flex; flex: none; height: 20px; padding: 2px 2px 0 2px; white-space: nowrap; overflow: hidden; line-height: 18px; }
.prompt { flex: 1; }
.cell { margin-right: 3px; padding-left: 1px; border: 1px solid #a0a0a0; border-color: #a0a0a0 #fff #fff #a0a0a0; line-height: 16px; }
.mode { width: 100px; }
.coords { width: 267px; }
.point { width: 58px; }
.snap { display: flex; width: 51px; border: 2px solid #707070; border-bottom: 0; background: #fff; }
.snap select { flex: 1; width: 10px; padding-left: 2px; }
.snap .arrow { width: 15px; height: 16px; background: #f0f0f0; }
```
